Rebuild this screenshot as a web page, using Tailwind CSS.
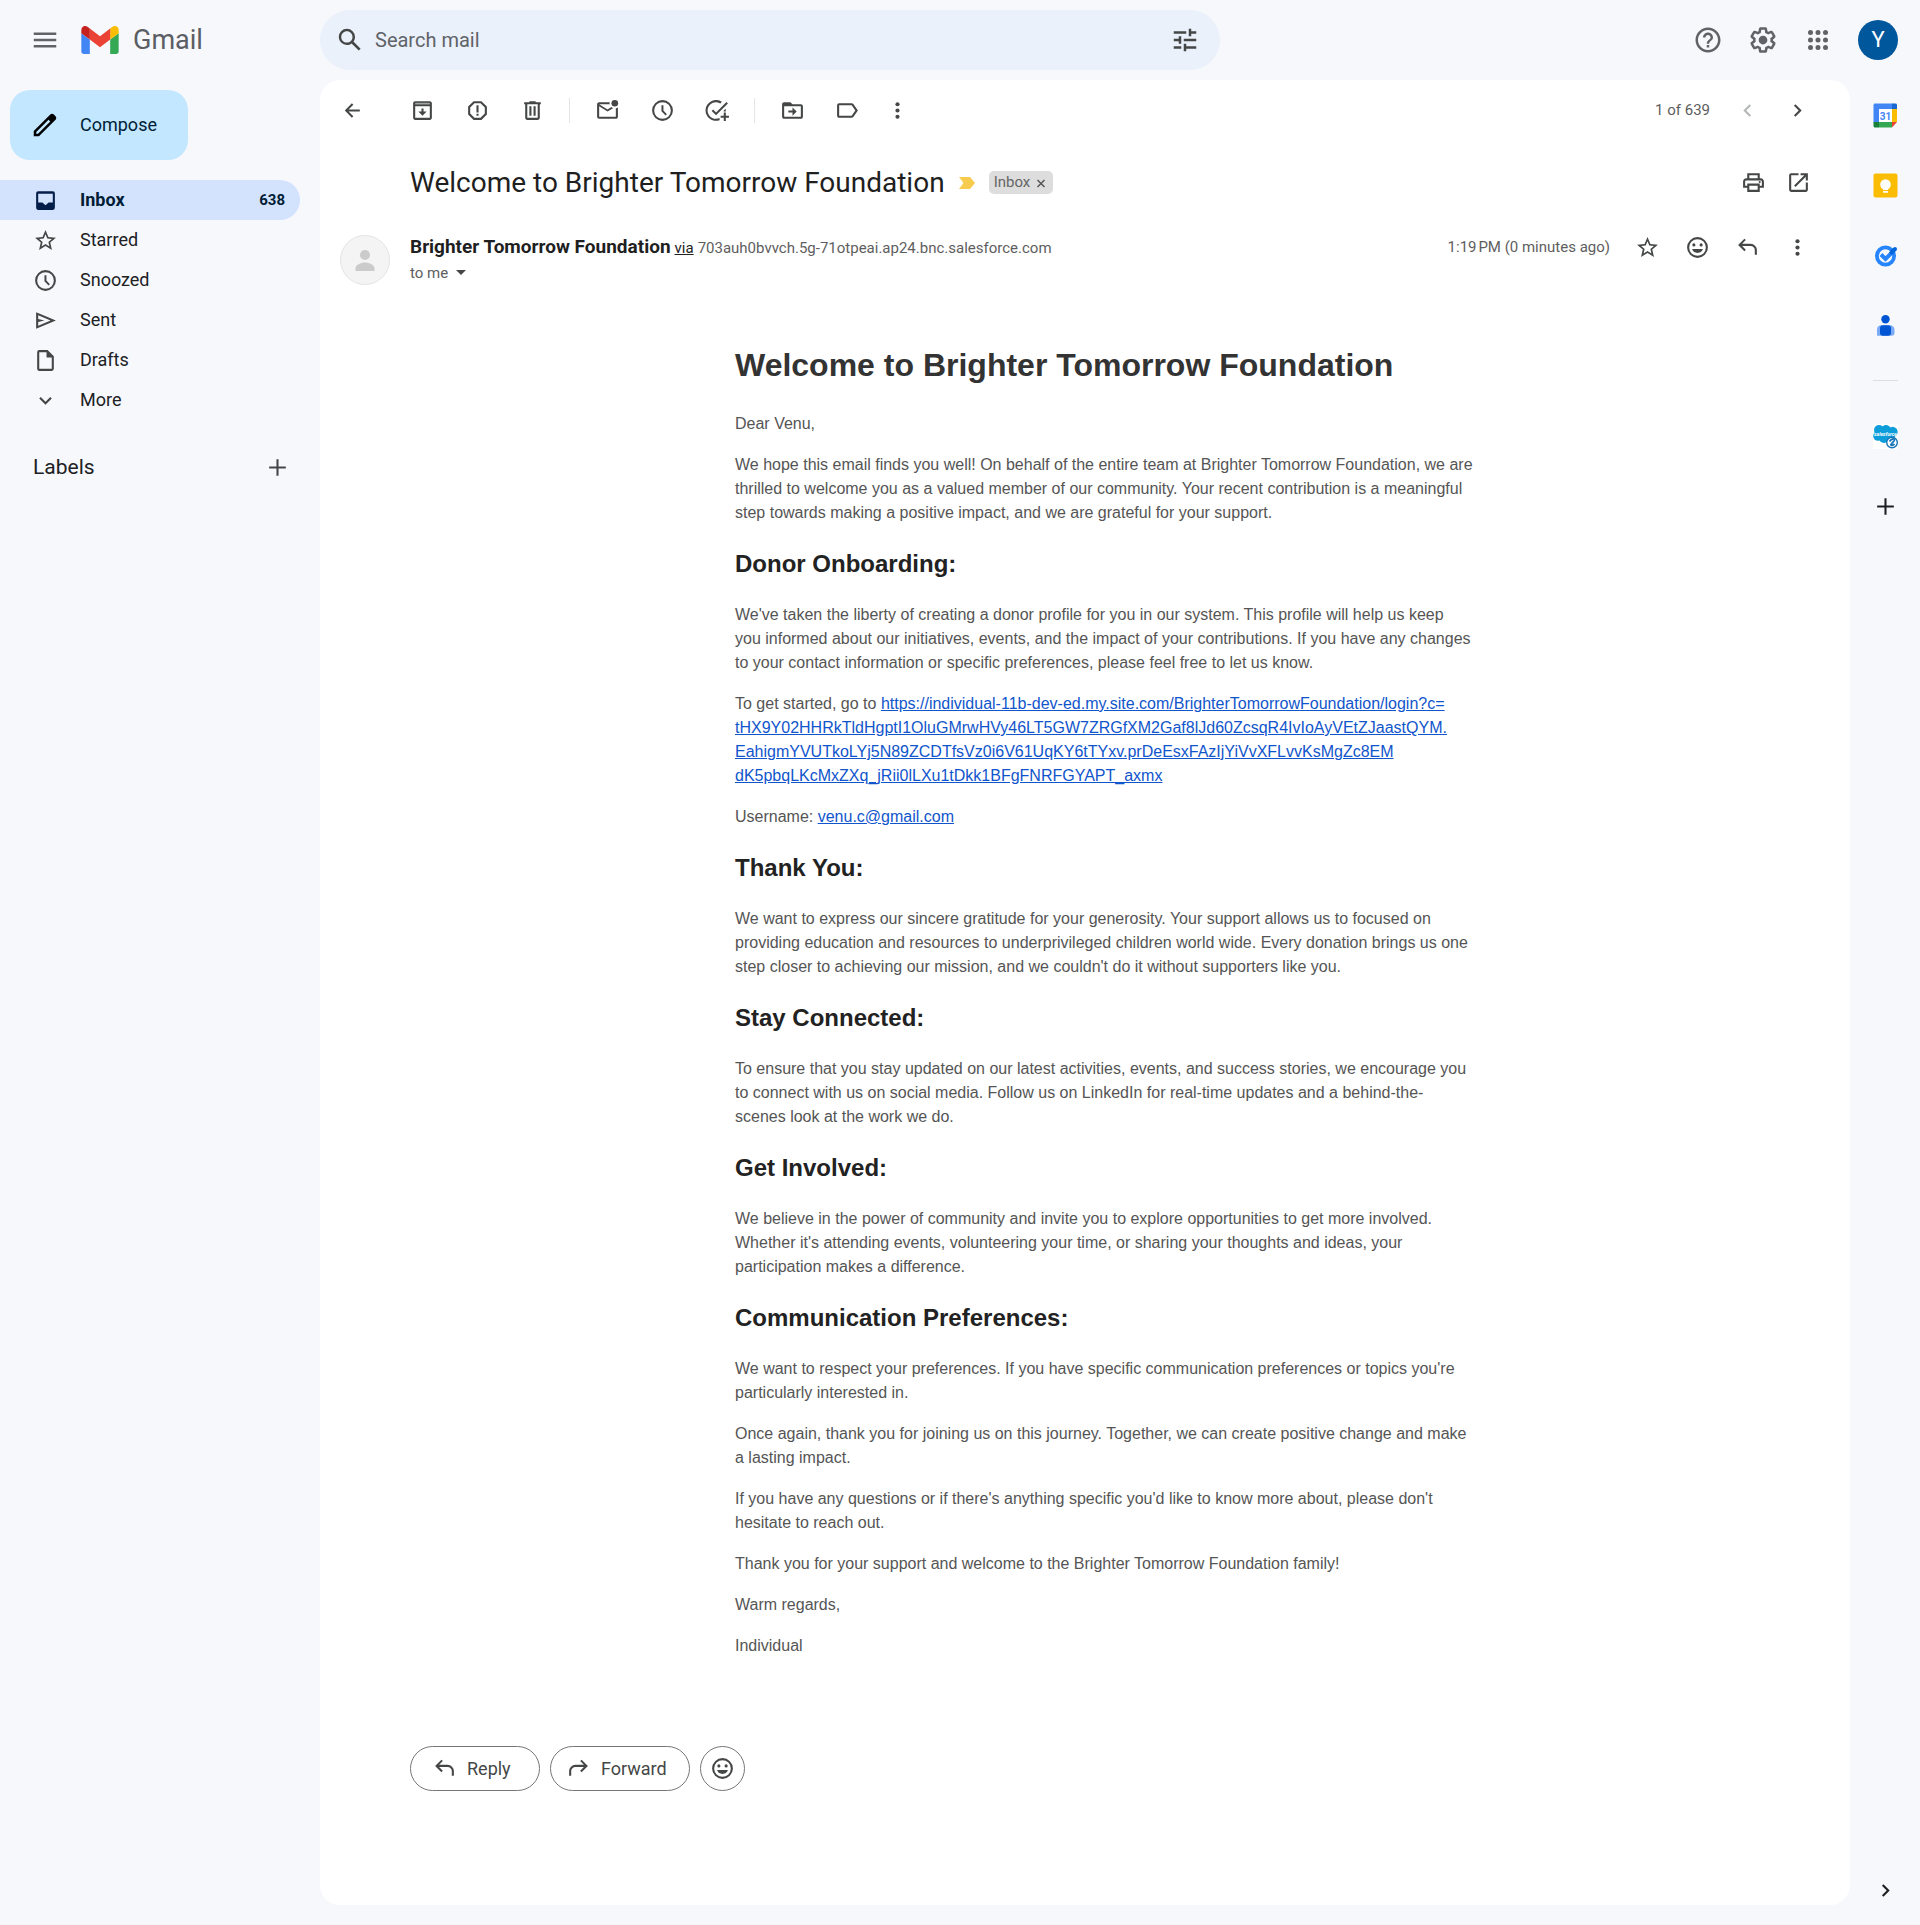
<!DOCTYPE html>
<html lang="en">
<head>
<meta charset="utf-8">
<meta name="viewport" content="width=device-width, initial-scale=1">
<title>Welcome to Brighter Tomorrow Foundation - Gmail</title>
<script src="https://cdn.jsdelivr.net/npm/@tailwindcss/browser@4"></script>
</head>
<body class="flex min-h-screen flex-col bg-[#f6f8fc] font-['Roboto','Liberation_Sans',sans-serif] text-[#202124]">

<svg class="hidden" aria-hidden="true">
  <symbol id="menu" viewBox="0 0 24 24"><path d="M3 18h18v-2H3v2zm0-5h18v-2H3v2zm0-7v2h18V6H3z"/></symbol>
  <symbol id="search" viewBox="0 0 24 24"><path d="M20.49 19l-5.73-5.73C15.53 12.2 16 10.91 16 9.5A6.5 6.5 0 1 0 9.5 16c1.41 0 2.7-.47 3.77-1.24L19 20.49 20.49 19zM5 9.500C5 7.010 7.010 5 9.500 5S14 7.010 14 9.500 11.990 14 9.500 14 5 11.990 5 9.500z"/></symbol>
  <symbol id="tune" viewBox="0 0 24 24"><path d="M3 17v2h6v-2H3zM3 5v2h10V5H3zm10 16v-2h8v-2h-8v-2h-2v6h2zM7 9v2H3v2h4v2h2V9H7zm14 4v-2H11v2h10zm-6-4h2V7h4V5h-4V3h-2v6z"/></symbol>
  <symbol id="help" viewBox="0 0 24 24"><path d="M11 18h2v-2h-2v2zm1-16C6.480 2 2 6.480 2 12s4.480 10 10 10 10-4.480 10-10S17.520 2 12 2zm0 18c-4.410 0-8-3.590-8-8s3.590-8 8-8 8 3.590 8 8-3.590 8-8 8zm0-14c-2.210 0-4 1.790-4 4h2c0-1.100.9-2 2-2s2 .9 2 2c0 2-3 1.750-3 5h2c0-2.250 3-2.500 3-5 0-2.210-1.790-4-4-4z"/></symbol>
  <symbol id="gear" viewBox="0 0 24 24"><path d="M13.85 22.25h-3.7c-.74 0-1.36-.54-1.45-1.27l-.27-1.89c-.27-.14-.53-.29-.79-.46l-1.8.72c-.7.26-1.47-.03-1.81-.65L2.2 15.53c-.35-.66-.2-1.44.36-1.88l1.53-1.19c-.01-.15-.02-.3-.02-.46 0-.15.01-.31.02-.46l-1.52-1.19c-.59-.45-.74-1.26-.37-1.88l1.85-3.19c.34-.62 1.11-.9 1.79-.63l1.81.73c.26-.17.52-.32.78-.46l.27-1.91c.09-.7.71-1.25 1.44-1.25h3.7c.74 0 1.36.54 1.45 1.27l.27 1.89c.27.14.53.29.79.46l1.8-.72c.71-.26 1.48.03 1.82.65l1.84 3.18c.36.66.2 1.44-.36 1.88l-1.52 1.19c.01.15.02.3.02.46s-.01.31-.02.46l1.52 1.19c.56.45.72 1.23.37 1.86l-1.86 3.22c-.34.62-1.11.9-1.8.63l-1.8-.72c-.26.17-.52.32-.78.46l-.27 1.91c-.1.68-.72 1.22-1.46 1.22zm-3.23-2h2.76l.37-2.55.53-.22c.44-.18.88-.44 1.34-.78l.45-.34 2.38.96 1.38-2.4-2.03-1.58.07-.56c.03-.26.06-.51.06-.78s-.03-.53-.06-.78l-.07-.56 2.03-1.58-1.39-2.4-2.39.96-.45-.35c-.42-.32-.87-.58-1.33-.77l-.52-.22-.37-2.55h-2.76l-.37 2.55-.53.21c-.44.19-.88.44-1.34.79l-.45.33-2.38-.95-1.39 2.39 2.03 1.58-.07.56a7 7 0 0 0-.06.79c0 .26.02.53.06.78l.07.56-2.03 1.58 1.38 2.4 2.39-.96.45.35c.43.33.86.58 1.33.77l.53.22.38 2.55z"/><circle cx="12" cy="12" r="3.500"/></symbol>
  <symbol id="apps" viewBox="0 0 24 24"><path d="M6 8a2 2 0 1 0 0-4 2 2 0 0 0 0 4zm6 0a2 2 0 1 0 0-4 2 2 0 0 0 0 4zm6 0a2 2 0 1 0 0-4 2 2 0 0 0 0 4zM6 14a2 2 0 1 0 0-4 2 2 0 0 0 0 4zm6 0a2 2 0 1 0 0-4 2 2 0 0 0 0 4zm6 0a2 2 0 1 0 0-4 2 2 0 0 0 0 4zM6 20a2 2 0 1 0 0-4 2 2 0 0 0 0 4zm6 0a2 2 0 1 0 0-4 2 2 0 0 0 0 4zm6 0a2 2 0 1 0 0-4 2 2 0 0 0 0 4z"/></symbol>
  <symbol id="pencil" viewBox="0 0 24 24"><path d="M20.410 4.940l-1.350-1.350c-.78-.78-2.050-.78-2.830 0L3 16.820V21h4.180L20.410 7.770c.79-.78.79-2.050 0-2.830zM6.410 19.060L5 19v-1.360l9.820-9.820 1.410 1.410-9.820 9.830z"/></symbol>
  <symbol id="inbox" viewBox="0 0 24 24"><path d="M19 3H5a2 2 0 0 0-2 2v14c0 1.100.9 2 2 2h14a2 2 0 0 0 2-2V5a2 2 0 0 0-2-2zm0 11h-4l-3 2.500L9 14H5V5.500h14V14z"/></symbol>
  <symbol id="star" viewBox="0 0 24 24"><path d="M22 9.240l-7.190-.62L12 2 9.190 8.630 2 9.240l5.460 4.730L5.820 21 12 17.270 18.180 21l-1.630-7.030L22 9.240zM12 15.400l-3.760 2.270 1-4.280-3.320-2.880 4.380-.38L12 6.100l1.710 4.040 4.380.38-3.320 2.880 1 4.280L12 15.400z"/></symbol>
  <symbol id="clock" viewBox="0 0 24 24"><path d="M12 2a10 10 0 1 0 0 20 10 10 0 0 0 0-20zm0 18a8 8 0 1 1 0-16 8 8 0 0 1 0 16zm.9-13H11v5.800l3.900 4 1.300-1.300-3.300-3.400z"/></symbol>
  <symbol id="send" viewBox="0 0 24 24"><path d="M3 20V4l19 8-19 8zm2-3l11.850-5L5 7v3.500l6 1.500-6 1.500V17z"/></symbol>
  <symbol id="draft" viewBox="0 0 24 24"><path d="M14 2H6a2 2 0 0 0-2 2v16c0 1.100.9 2 2 2h12a2 2 0 0 0 2-2V8l-6-6zM6 20V4h7v5h5v11H6z"/></symbol>
  <symbol id="down" viewBox="0 0 24 24"><path d="M16.590 8.590L12 13.170 7.410 8.590 6 10l6 6 6-6z"/></symbol>
  <symbol id="left" viewBox="0 0 24 24"><path d="M15.410 7.410L14 6l-6 6 6 6 1.410-1.410L10.830 12z"/></symbol>
  <symbol id="right" viewBox="0 0 24 24"><path d="M10 6L8.590 7.410 13.170 12l-4.580 4.590L10 18l6-6z"/></symbol>
  <symbol id="plus" viewBox="0 0 24 24"><path d="M20 13h-7v7h-2v-7H4v-2h7V4h2v7h7v2z"/></symbol>
  <symbol id="back" viewBox="0 0 24 24"><path d="M19 11.100H8.200l4.600-4.600L11.400 5.100 4.600 12l6.800 6.900 1.400-1.400-4.600-4.600H19z"/></symbol>
  <symbol id="archive" viewBox="0 0 24 24"><path d="M19 3H5c-1.100 0-2 .9-2 2v14c0 1.100.9 2 2 2h14c1.100 0 2-.9 2-2V5c0-1.100-.9-2-2-2zm0 16H5V8h14v11z"/><path class="opacity-50" fill="#fff" d="M5 4.600h14v1.600H5z"/><path d="M13 10h-2v3H8l4 4 4-4h-3z"/></symbol>
  <symbol id="spam" viewBox="0 0 24 24"><path d="M15.730 3H8.270L3 8.270v7.460L8.270 21h7.460L21 15.730V8.270L15.730 3zM19 14.900L14.900 19H9.100L5 14.900V9.100L9.100 5h5.800L19 9.100v5.800z"/><path d="M11 7h2v7h-2zM11 15h2v2h-2z"/></symbol>
  <symbol id="trash" viewBox="0 0 24 24"><path d="M15 4V3H9v1H4v2h1v13c0 1.100.9 2 2 2h10c1.100 0 2-.9 2-2V6h1V4h-5zm2 15H7V6h10v13z"/><path d="M9 8h2v9H9zm4 0h2v9h-2z"/></symbol>
  <symbol id="unread" viewBox="0 0 24 24"><path d="M20 20H4a2 2 0 0 1-2-2V6c0-1.100.9-2 2-2h10.100a5 5 0 0 0 0 2H4l8 5 3.700-2.300c.5.500 1.100.8 1.700 1.100L12 13 4 8v10h16V9.900a5 5 0 0 0 2-.9v9c0 1.100-.9 2-2 2z"/><circle cx="19" cy="5" r="3.200"/></symbol>
  <symbol id="task" viewBox="0 0 24 24"><path d="M22 5.200L10.600 16.600l-4.200-4.200 1.400-1.400 2.800 2.800L20.600 3.800zM19.800 10.200L18 12a6 6 0 0 1-.1 1h2a10 10 0 0 0-.1-2.800zM10.500 20a8 8 0 1 1 4.200-14.800l1.500-1.500A10 10 0 1 0 14 21.300V19.200a8 8 0 0 1-3.500.8zM20 14h-2v3h-3v2h3v3h2v-3h3v-2h-3z"/></symbol>
  <symbol id="move" viewBox="0 0 24 24"><path d="M20 6h-8l-2-2H4c-1.100 0-2 .9-2 2v12c0 1.100.9 2 2 2h16c1.100 0 2-.9 2-2V8c0-1.100-.9-2-2-2zm0 12H4V8h16v10z"/><path d="M12 17l4-4-4-4v3H8v2h4z"/></symbol>
  <symbol id="label" viewBox="0 0 24 24"><path d="M16 5H4a2 2 0 0 0-2 2v10c0 1.100.9 2 2 2h12a2 2 0 0 0 1.600-.8L22 12l-4.400-6.200A2 2 0 0 0 16 5zm0 12H4V7h12l3.500 5-3.500 5z"/></symbol>
  <symbol id="more" viewBox="0 0 24 24"><circle cx="12" cy="6" r="2"/><circle cx="12" cy="12" r="2"/><circle cx="12" cy="18" r="2"/></symbol>
  <symbol id="print" viewBox="0 0 24 24"><path d="M19 8h-1V3H6v5H5c-1.660 0-3 1.340-3 3v6h4v4h12v-4h4v-6c0-1.660-1.340-3-3-3zM8 5h8v3H8V5zm8 12v2H8v-4h8v2zm2-2v-2H6v2H4v-4c0-.55.450-1 1-1h14c.55 0 1 .450 1 1v4h-2z"/><circle cx="18" cy="11.500" r="1"/></symbol>
  <symbol id="open" viewBox="0 0 24 24"><path d="M19 19H5V5h7V3H5a2 2 0 0 0-2 2v14a2 2 0 0 0 2 2h14c1.100 0 2-.9 2-2v-7h-2v7zM14 3v2h3.590l-9.830 9.830 1.410 1.410L19 6.410V10h2V3h-7z"/></symbol>
  <symbol id="smile" viewBox="0 0 24 24"><path d="M12 2a10 10 0 1 0 0 20 10 10 0 0 0 0-20zm0 18a8 8 0 1 1 0-16 8 8 0 0 1 0 16z"/><circle cx="8.500" cy="9.500" r="1.500"/><circle cx="15.500" cy="9.500" r="1.500"/><path d="M6.800 13.500a5.500 5.500 0 0 0 10.400 0z"/></symbol>
  <symbol id="reply" viewBox="0 0 24 24"><path d="M6.830 10.500L10.400 14.100 9 15.500l-6-6 6-6 1.400 1.400L6.830 8.500H15a6 6 0 0 1 6 6V19h-2v-4.500a4 4 0 0 0-4-4z"/></symbol>
  <symbol id="forward" viewBox="0 0 24 24"><path d="M17.170 10.500L13.600 14.100 15 15.500l6-6-6-6-1.400 1.400 3.570 3.600H9a6 6 0 0 0-6 6V19h2v-4.500a4 4 0 0 1 4-4z"/></symbol>
</svg>

<header class="flex h-20 items-center">
  <div class="flex w-80 shrink-0 items-center">
    <button class="ml-[30px] text-[#5f6368]" aria-label="Main menu"><svg class="size-[30px] fill-current"><use href="#menu"/></svg></button>
    <a href="#" class="ml-[21px] flex items-center gap-3.5">
      <svg class="h-7 w-[38px]" viewBox="52 42 88 66" aria-hidden="true">
        <path fill="#4285f4" d="M58 108h14V74L52 59v43c0 3.320 2.690 6 6 6"/>
        <path fill="#34a853" d="M120 108h14c3.320 0 6-2.690 6-6V59l-20 15"/>
        <path fill="#fbbc04" d="M120 48v26l20-15v-8c0-7.420-8.470-11.650-14.400-7.200"/>
        <path fill="#ea4335" d="M72 74V48l24 18 24-18v26L96 92"/>
        <path fill="#c5221f" d="M52 51v8l20 15V48l-5.600-4.200c-5.940-4.450-14.400-.22-14.400 7.200"/>
      </svg>
      <span class="text-[27px] leading-8 text-[#5b5e63]">Gmail</span>
    </a>
  </div>
  <form class="flex h-[60px] max-w-[900px] flex-1 items-center rounded-full bg-[#eaf1fb] px-[15px] text-[#444746]" role="search">
    <button type="button" aria-label="Search"><svg class="size-[30px] fill-current"><use href="#search"/></svg></button>
    <input class="ml-2.5 min-w-0 flex-1 bg-transparent text-[20px] leading-7 text-[#444746] outline-none placeholder:text-[#5f6368]" type="text" placeholder="Search mail" aria-label="Search mail">
    <button type="button" class="mr-[5px]" aria-label="Show search options"><svg class="size-[30px] fill-current"><use href="#tune"/></svg></button>
  </form>
  <div class="ml-auto flex items-center gap-[25px] pr-[22px] pl-6 text-[#5f6368]">
    <button aria-label="Support"><svg class="size-[30px] fill-current"><use href="#help"/></svg></button>
    <button aria-label="Settings"><svg class="size-[30px] fill-current"><use href="#gear"/></svg></button>
    <button aria-label="Google apps"><svg class="size-[30px] fill-current"><use href="#apps"/></svg></button>
    <button class="size-10 rounded-full bg-[#01579b] text-[22px] leading-10 text-white" aria-label="Google Account">Y</button>
  </div>
</header>

<div class="flex flex-1">
  <nav class="w-80 shrink-0 pt-2.5 text-[18px] leading-6">
    <button class="ml-2.5 flex h-[70px] w-[178px] items-center gap-5 rounded-[20px] bg-[#c2e7ff] pl-5 text-[#001d35]"><svg class="size-[30px] fill-black"><use href="#pencil"/></svg>Compose</button>
    <ul class="mt-5 pr-5 text-[#202124]">
      <li><a href="#" class="flex h-10 items-center gap-[22px] rounded-r-full bg-[#d3e3fd] pr-[15px] pl-[33px] font-bold text-[#001d35]"><svg class="size-[25px] fill-[#041e49]"><use href="#inbox"/></svg>Inbox<span class="ml-auto text-[15px]">638</span></a></li>
      <li><a href="#" class="flex h-10 items-center gap-[22px] pl-[33px]"><svg class="size-[25px] fill-[#444746]"><use href="#star"/></svg>Starred</a></li>
      <li><a href="#" class="flex h-10 items-center gap-[22px] pl-[33px]"><svg class="size-[25px] fill-[#444746]"><use href="#clock"/></svg>Snoozed</a></li>
      <li><a href="#" class="flex h-10 items-center gap-[22px] pl-[33px]"><svg class="size-[25px] fill-[#444746]"><use href="#send"/></svg>Sent</a></li>
      <li><a href="#" class="flex h-10 items-center gap-[22px] pl-[33px]"><svg class="size-[25px] fill-[#444746]"><use href="#draft"/></svg>Drafts</a></li>
      <li><a href="#" class="flex h-10 items-center gap-[22px] pl-[33px]"><svg class="size-[25px] fill-[#444746]"><use href="#down"/></svg>More</a></li>
    </ul>
    <div class="mt-[33px] flex items-center justify-between pr-[30px] pl-[33px]">
      <h2 class="text-[21px] leading-7">Labels</h2>
      <button aria-label="Create new label"><svg class="size-[25px] fill-[#444746]"><use href="#plus"/></svg></button>
    </div>
  </nav>

  <main class="mb-5 min-w-0 flex-1 rounded-[20px] bg-white">
    <div class="flex h-[60px] items-center pr-7 pl-[7px] text-[#444746]">
      <button class="flex w-[50px] justify-center" aria-label="Back to Inbox"><svg class="size-[25px] fill-current"><use href="#back"/></svg></button>
      <div class="ml-[18px] flex items-center">
        <button class="flex w-[55px] justify-center" aria-label="Archive"><svg class="size-[25px] fill-current"><use href="#archive"/></svg></button>
        <button class="flex w-[55px] justify-center" aria-label="Report spam"><svg class="size-[25px] fill-current"><use href="#spam"/></svg></button>
        <button class="flex w-[55px] justify-center" aria-label="Delete"><svg class="size-[25px] fill-current"><use href="#trash"/></svg></button>
      </div>
      <div class="ml-[9px] flex items-center border-l border-[#e3e5e8] pl-2.5">
        <button class="flex w-[55px] justify-center" aria-label="Mark as unread"><svg class="size-[25px] fill-current"><use href="#unread"/></svg></button>
        <button class="flex w-[55px] justify-center" aria-label="Snooze"><svg class="size-[25px] fill-current"><use href="#clock"/></svg></button>
        <button class="flex w-[55px] justify-center" aria-label="Add to Tasks"><svg class="size-[25px] fill-current"><use href="#task"/></svg></button>
      </div>
      <div class="ml-[9px] flex items-center border-l border-[#e3e5e8] pl-2.5">
        <button class="flex w-[55px] justify-center" aria-label="Move to"><svg class="size-[25px] fill-current"><use href="#move"/></svg></button>
        <button class="flex w-[55px] justify-center" aria-label="Labels"><svg class="size-[25px] fill-current"><use href="#label"/></svg></button>
        <button class="flex w-[45px] justify-center" aria-label="More"><svg class="size-[25px] fill-current"><use href="#more"/></svg></button>
      </div>
      <span class="mr-3 ml-auto text-[15px] leading-5 text-[#5e5e5e]">1 of 639</span>
      <button class="flex w-[50px] justify-center text-[#b5b6b8]" aria-label="Newer" disabled><svg class="size-[25px] fill-current"><use href="#left"/></svg></button>
      <button class="flex w-[50px] justify-center" aria-label="Older"><svg class="size-[25px] fill-current"><use href="#right"/></svg></button>
    </div>

    <div class="flex h-[85px] items-center pr-[29px] pl-[90px]">
      <h1 class="text-[28px] leading-9 text-[#1f1f1f]">Welcome to Brighter Tomorrow Foundation</h1>
      <svg class="ml-3.5 h-3.5 w-4" viewBox="0 0 16 14" aria-label="Important"><path fill="#f7cb4d" d="M0 1h11l5 6-5 6H0l4.500-6z"/></svg>
      <div class="ml-3.5 flex h-[23px] items-center gap-1 rounded-[5px] bg-[#ddd] px-[5px] text-[15px] text-[#666]">
        <span>Inbox</span>
        <button aria-label="Remove label Inbox from this conversation"><svg class="size-3.5 stroke-[#555]" viewBox="0 0 14 14"><path stroke-width="1.500" d="M3.500 4l7 7m0-7l-7 7"/></svg></button>
      </div>
      <div class="ml-auto flex text-[#444746]">
        <button class="flex w-[45px] justify-center" aria-label="Print all"><svg class="size-[25px] fill-current"><use href="#print"/></svg></button>
        <button class="flex w-[45px] justify-center" aria-label="In new window"><svg class="size-[25px] fill-current"><use href="#open"/></svg></button>
      </div>
    </div>

    <div class="flex items-start pt-2.5 pr-7 pl-5">
      <div class="flex size-[50px] items-center justify-center rounded-full border border-[#e4e4e4] bg-[#f4f4f4]">
        <svg class="size-[30px] fill-[#cbcbcb]" viewBox="0 0 30 30" aria-hidden="true"><circle cx="15" cy="10" r="5"/><path d="M5.500 26v-3c0-3 5-5.500 9.500-5.500s9.500 2.500 9.500 5.500v3z"/></svg>
      </div>
      <div class="ml-5 text-[15px] leading-6 text-[#5e5e5e]">
        <div class="flex h-[25px] items-baseline gap-1"><span class="text-[19px] font-bold text-[#1f1f1f]">Brighter Tomorrow Foundation</span><a href="#" class="text-[#222] underline">via</a><span>703auh0bvvch.5g-71otpeai.ap24.bnc.salesforce.com</span></div>
        <button class="flex h-[25px] items-center gap-2">to me <svg class="h-[5px] w-2.5 fill-[#444746]" viewBox="0 0 10 5"><path d="M0 0h10L5 5z"/></svg></button>
      </div>
      <div class="ml-auto flex h-[25px] items-center text-[#444746]">
        <time class="mr-3 text-[15px] text-[#5e5e5e]">1:19&#8239;PM (0 minutes ago)</time>
        <button class="flex w-[50px] justify-center" aria-label="Star"><svg class="size-[25px] fill-current"><use href="#star"/></svg></button>
        <button class="flex w-[50px] justify-center" aria-label="Add reaction"><svg class="size-[25px] fill-current"><use href="#smile"/></svg></button>
        <button class="flex w-[50px] justify-center" aria-label="Reply"><svg class="size-[25px] fill-current"><use href="#reply"/></svg></button>
        <button class="flex w-[50px] justify-center" aria-label="More message options"><svg class="size-[25px] fill-current"><use href="#more"/></svg></button>
      </div>
    </div>

    <div class="mt-[60px] pr-10 pl-[90px]">
      <article class="mx-auto max-w-[750px] font-['Liberation_Sans',Arial,sans-serif] text-base leading-6 text-[#555]">
        <h1 class="mb-[27px] text-[32px] leading-10 font-bold text-[#333]">Welcome to Brighter Tomorrow Foundation</h1>
        <p class="mb-[17px]">Dear Venu,</p>
        <p class="mb-[25px]">We hope this email finds you well! On behalf of the entire team at Brighter Tomorrow Foundation, we are<br>thrilled to welcome you as a valued member of our community. Your recent contribution is a meaningful<br>step towards making a positive impact, and we are grateful for your support.</p>

        <h2 class="mb-[25px] text-2xl leading-7 font-bold text-[#222]">Donor Onboarding:</h2>
        <p class="mb-[17px]">We've taken the liberty of creating a donor profile for you in our system. This profile will help us keep<br>you informed about our initiatives, events, and the impact of your contributions. If you have any changes<br>to your contact information or specific preferences, please feel free to let us know.</p>
        <p class="mb-[17px]">To get started, go to <a href="#" class="text-[#15c] underline">https://individual-11b-dev-ed.my.site.com/BrighterTomorrowFoundation/login?c=<br>tHX9Y02HHRkTldHgptI1OluGMrwHVy46LT5GW7ZRGfXM2Gaf8lJd60ZcsqR4IvIoAyVEtZJaastQYM.<br>EahigmYVUTkoLYj5N89ZCDTfsVz0i6V61UqKY6tTYxv.prDeEsxFAzIjYiVvXFLvvKsMgZc8EM<br>dK5pbqLKcMxZXq_jRii0lLXu1tDkk1BFgFNRFGYAPT_axmx</a></p>
        <p class="mb-[25px]">Username: <a href="#" class="text-[#15c] underline">venu.c@gmail.com</a></p>

        <h2 class="mb-[25px] text-2xl leading-7 font-bold text-[#222]">Thank You:</h2>
        <p class="mb-[25px]">We want to express our sincere gratitude for your generosity. Your support allows us to focused on<br>providing education and resources to underprivileged children world wide. Every donation brings us one<br>step closer to achieving our mission, and we couldn't do it without supporters like you.</p>

        <h2 class="mb-[25px] text-2xl leading-7 font-bold text-[#222]">Stay Connected:</h2>
        <p class="mb-[25px]">To ensure that you stay updated on our latest activities, events, and success stories, we encourage you<br>to connect with us on social media. Follow us on LinkedIn for real-time updates and a behind-the-<br>scenes look at the work we do.</p>

        <h2 class="mb-[25px] text-2xl leading-7 font-bold text-[#222]">Get Involved:</h2>
        <p class="mb-[25px]">We believe in the power of community and invite you to explore opportunities to get more involved.<br>Whether it's attending events, volunteering your time, or sharing your thoughts and ideas, your<br>participation makes a difference.</p>

        <h2 class="mb-[25px] text-2xl leading-7 font-bold text-[#222]">Communication Preferences:</h2>
        <p class="mb-[17px]">We want to respect your preferences. If you have specific communication preferences or topics you're<br>particularly interested in.</p>
        <p class="mb-[17px]">Once again, thank you for joining us on this journey. Together, we can create positive change and make<br>a lasting impact.</p>
        <p class="mb-[17px]">If you have any questions or if there's anything specific you'd like to know more about, please don't<br>hesitate to reach out.</p>
        <p class="mb-[17px]">Thank you for your support and welcome to the Brighter Tomorrow Foundation family!</p>
        <p class="mb-[17px]">Warm regards,</p>
        <p>Individual</p>
      </article>
    </div>

    <div class="mt-[88px] flex gap-2.5 pb-[113px] pl-[90px] text-[18px] text-[#444746]">
      <button class="flex h-[45px] w-[130px] items-center gap-2.5 rounded-full border border-[#747775] pl-[21px]"><svg class="size-[25px] fill-current"><use href="#reply"/></svg>Reply</button>
      <button class="flex h-[45px] w-[140px] items-center gap-2.5 rounded-full border border-[#747775] pl-[15px]"><svg class="size-[25px] fill-current"><use href="#forward"/></svg>Forward</button>
      <button class="flex size-[45px] items-center justify-center rounded-full border border-[#747775]" aria-label="Add reaction"><svg class="size-[25px] fill-current"><use href="#smile"/></svg></button>
    </div>
  </main>

  <aside class="flex w-[70px] shrink-0 flex-col items-center pt-[23px] pb-[22px]">
    <div class="flex flex-col items-center gap-[45px]">
      <button aria-label="Calendar"><svg class="size-[25px]" viewBox="0 0 25 25"><path fill="#4285f4" d="M2 .5h17.500V6H6v13.500H.5V2C.5 1.200 1.200.5 2 .5z"/><path fill="#1967d2" d="M19 .5h3.500c.8 0 1.500.7 1.500 1.500v4h-5z"/><path fill="#fbbc04" d="M19 6h5v13h-5z"/><path fill="#34a853" d="M6 19h13v5.500H6z"/><path fill="#188038" d="M.5 19H6v5.500H2c-.8 0-1.500-.7-1.500-1.500z"/><path fill="#ea4335" d="M19 19h5l-5 5.500z"/><path fill="#fff" d="M6 6h13v13H6z"/><text x="12.500" y="16.500" text-anchor="middle" class="text-[10px] font-bold" fill="#4285f4">31</text></svg></button>
      <button aria-label="Keep"><svg class="size-[25px]" viewBox="0 0 25 25"><rect x=".5" y=".5" width="24" height="24" rx="2" fill="#fbbc04"/><circle cx="12.500" cy="11.500" r="5.300" fill="#fff"/><path fill="#fff" d="M10 14h5v3h-5zm0 4h5v1.800h-5z"/></svg></button>
      <button aria-label="Tasks"><svg class="size-[25px]" viewBox="0 0 25 25"><circle cx="12.500" cy="13" r="8.600" fill="none" stroke="#2684fc" stroke-width="3.800"/><path fill="none" stroke="#2684fc" stroke-width="4" d="M8 11.500l4.500 4.500 6-6"/><path stroke="#0066da" stroke-width="4" stroke-linecap="round" d="M18.500 9.500L22 6"/></svg></button>
      <button aria-label="Contacts"><svg class="size-[25px]" viewBox="0 0 25 25"><circle cx="12.500" cy="6.200" r="4.200" fill="#0056d2"/><path fill="#7baaf7" d="M8 12.200h9a4.500 4.500 0 0 1 4.500 4.500v3a3 3 0 0 1-3 3H4v-6a4.500 4.500 0 0 1 4-4.500z"/><path fill="#0056d2" d="M10 12.200h5a3 3 0 0 1 3 3v4.500a3 3 0 0 1-3 3h-5a3 3 0 0 1-3-3v-4.500a3 3 0 0 1 3-3z"/></svg></button>
    </div>
    <hr class="mt-[42px] mb-[43px] w-[25px] border-[#dcdfe0]">
    <div class="flex flex-col items-center gap-[45px]">
      <button aria-label="Salesforce"><svg class="size-[25px] bg-white" viewBox="0 0 25 25"><g fill="#0d9ddb"><circle cx="6" cy="6" r="5"/><circle cx="13" cy="5.500" r="4.500"/><circle cx="19.500" cy="8" r="5.200"/><circle cx="5" cy="12" r="4.800"/><circle cx="11" cy="14" r="5"/><circle cx="16" cy="12.500" r="4.500"/></g><text x="12.500" y="11.500" text-anchor="middle" class="text-[5px] font-bold italic" fill="#fff">salesforce</text><circle cx="19" cy="18.500" r="5.300" fill="#fff" stroke="#1675b8" stroke-width="1.400"/><path fill="none" stroke="#1675b8" stroke-width="1.800" d="M16.500 17.500c1.500-2 4.500-3.500 5-2s-3 3.500-3.500 5 2 1 3.500-.5"/></svg></button>
      <button aria-label="Get Add-ons"><svg class="size-[25px] fill-[#1f1f1f]"><use href="#plus"/></svg></button>
    </div>
    <button class="mt-auto" aria-label="Hide side panel"><svg class="size-[25px] fill-[#1f1f1f]"><use href="#right"/></svg></button>
  </aside>
</div>
</body>
</html>
